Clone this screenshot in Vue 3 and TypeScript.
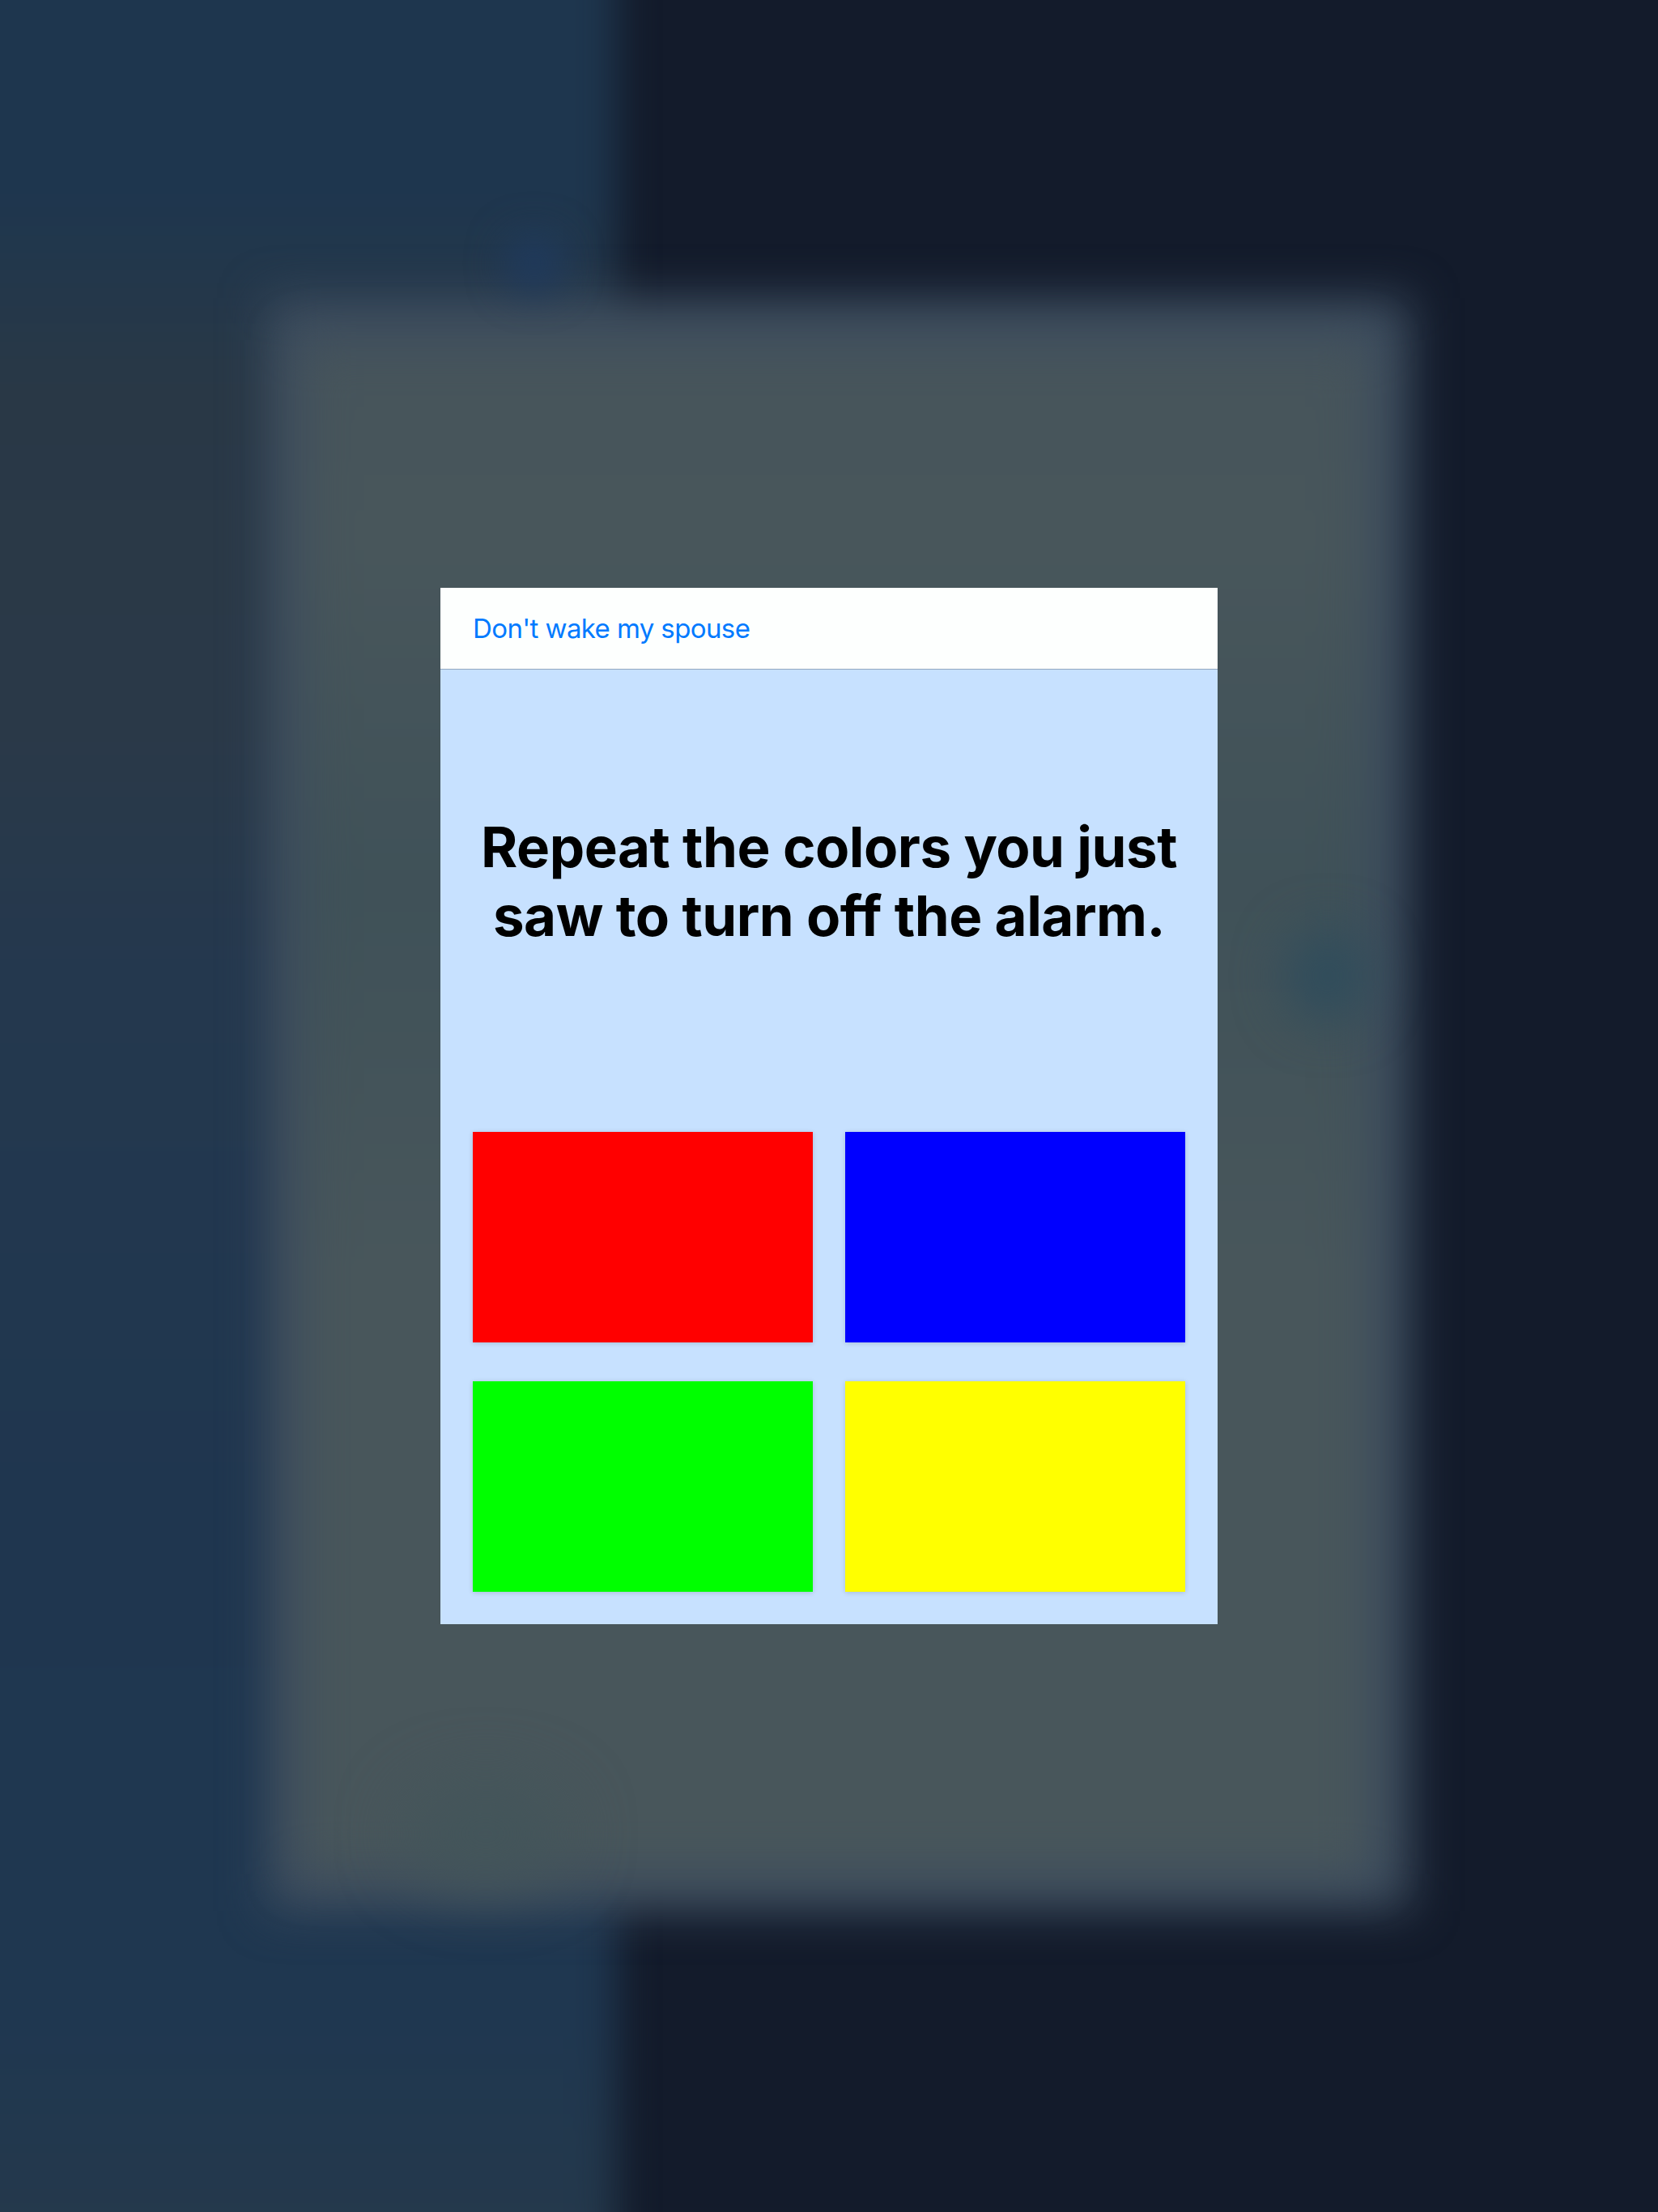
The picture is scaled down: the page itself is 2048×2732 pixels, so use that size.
<script setup lang="ts">
const colors: string[] = ['#ff0000', '#0000ff', '#00ff00', '#ffff00']
</script>

<template>
  <div class="screen">
    <div class="backdrop" aria-hidden="true">
      <div class="column"></div>
      <div class="halo"></div>
      <div class="panel"></div>
      <div class="blob blob-teal"></div>
      <div class="blob blob-blue"></div>
      <div class="blob blob-green"></div>
    </div>
    <section class="dialog">
      <header class="bar"><a class="link">Don't wake my spouse</a></header>
      <div class="body">
        <h1 class="title">Repeat the colors you just<br />saw to turn off the alarm.</h1>
        <div class="grid">
          <button v-for="c in colors" :key="c" class="swatch" :style="{ background: c }"></button>
        </div>
      </div>
    </section>
  </div>
</template>

<style scoped>
.screen {
  position: relative;
  width: 2048px;
  height: 2732px;
  overflow: hidden;
  background: #131b2b;
  display: flex;
  align-items: center;
  justify-content: center;
  font-family: Inter, "Liberation Sans", sans-serif;
}
.backdrop {
  position: absolute;
  inset: 0;
}
.column {
  position: absolute;
  left: -100px;
  top: -100px;
  width: 862px;
  height: 2932px;
  filter: blur(24px);
  background: linear-gradient(
    180deg,
    #1e364e 0,
    #1e364e 340px,
    #293846 580px,
    #2a3948 1000px,
    #24384e 1300px,
    #1f364f 1950px,
    #1f3750 2600px,
    #26394a 2932px
  );
}
.halo {
  position: absolute;
  left: 330px;
  top: 368px;
  width: 1412px;
  height: 1992px;
  background: #3c4c5e;
  filter: blur(28px);
}
.panel {
  position: absolute;
  left: 368px;
  top: 420px;
  width: 1326px;
  height: 1895px;
  filter: blur(30px);
  background: linear-gradient(180deg, #46545b 0, #48565b 250px, #3f5158 680px, #48565b 1150px, #48565b 1895px);
}
.blob {
  position: absolute;
  border-radius: 50%;
}
.blob-teal {
  left: 1590px;
  top: 1150px;
  width: 100px;
  height: 110px;
  background: #2e4c5c;
  filter: blur(32px);
}
.blob-blue {
  left: 625px;
  top: 290px;
  width: 70px;
  height: 70px;
  background: #1f3a5e;
  filter: blur(24px);
}
.blob-green {
  left: 500px;
  top: 2200px;
  width: 200px;
  height: 130px;
  background: #43555a;
  filter: blur(40px);
}
.dialog {
  position: relative;
  width: 960px;
  height: 1280px;
  display: flex;
  flex-direction: column;
  background: #c7e1ff;
}
.bar {
  box-sizing: border-box;
  padding: 0 40px;
  display: flex;
  align-items: center;
  background: #fdfffe;
  border-bottom: 1px solid #93a7bf;
  flex: none;
  height: 101px;
}
.link {
  font-size: 33px;
  letter-spacing: -0.6px;
  color: #007aff;
}
.body {
  flex: 1;
  display: flex;
  flex-direction: column;
  padding: 0 40px 40px;
}
.title {
  margin: 0;
  padding-bottom: 48px;
  flex: 1;
  display: flex;
  align-items: center;
  justify-content: center;
  text-align: center;
  font-size: 69px;
  line-height: 85px;
  font-weight: 700;
  letter-spacing: -0.5px;
  font-variant-ligatures: none;
  color: #000;
}
.grid {
  display: grid;
  grid-template-columns: 420px 420px;
  grid-template-rows: 260px 260px;
  column-gap: 40px;
  row-gap: 48px;
}
.swatch {
  border: 0;
  padding: 0;
  box-shadow: 0 1px 6px rgba(0, 0, 0, 0.16);
}
</style>
